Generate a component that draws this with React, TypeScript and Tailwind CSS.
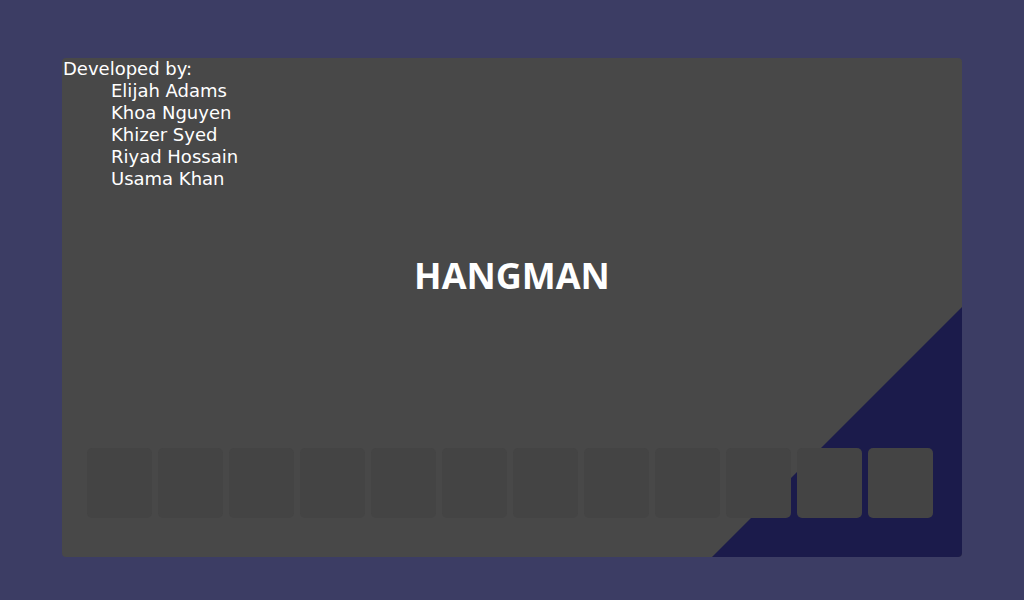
const DEVS = ["Elijah Adams", "Khoa Nguyen", "Khizer Syed", "Riyad Hossain", "Usama Khan"];

export default function App() {
  return (
    <div className="h-[600px] w-[1024px] bg-[#3c3d64] pt-[58px] pl-[62px]">
      <div className="relative h-[499px] w-[900px] overflow-hidden rounded-[4px] bg-[#484848]">
        {/* corner triangle */}
        <div className="absolute bottom-0 right-0 h-[250px] w-[250px] bg-[#1b1b4b] [clip-path:polygon(100%_0,100%_100%,0_100%)]" />

        <div className="relative flex h-full flex-col">
          <div className="pl-px text-[18px] leading-[22px] text-white font-['DejaVu_Sans',sans-serif]">
            <p>Developed by:</p>
            {DEVS.map((d) => (
              <p key={d} className="pl-[48px]">
                {d}
              </p>
            ))}
          </div>

          <h1 className="mt-[66px] text-center text-[36px] font-bold leading-[40px] text-white font-['Open_Sans',sans-serif]">
            HANGMAN
          </h1>

          <div className="mt-[152px] flex gap-[6px] pl-[25px]">
            {Array.from({ length: 12 }).map((_, i) => (
              <div key={i} className="h-[70px] w-[65px] rounded-[5px] bg-[#444444]" />
            ))}
          </div>
        </div>
      </div>
    </div>
  );
}
